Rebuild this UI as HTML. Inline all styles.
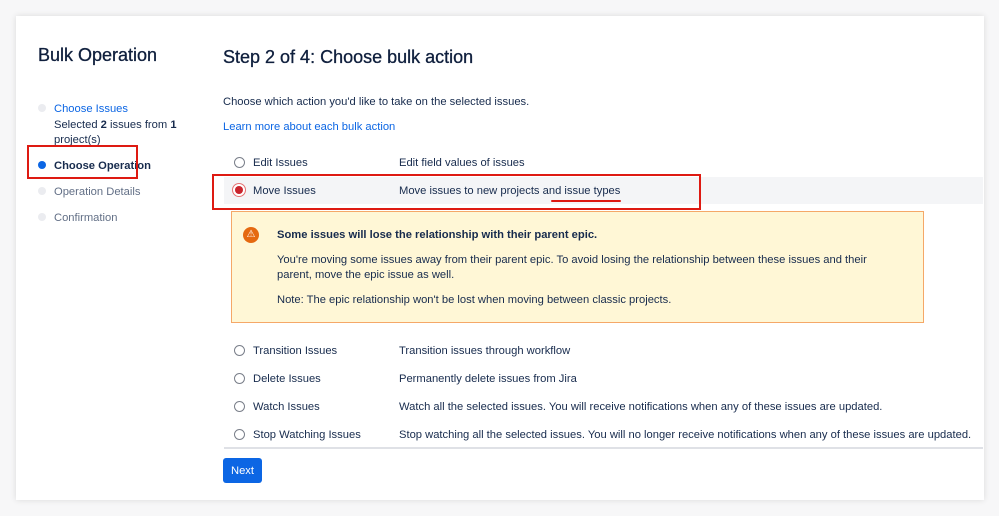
<!DOCTYPE html>
<html><head><style>
*{margin:0;padding:0;box-sizing:border-box}
body{width:999px;height:516px;background:#f7f7f8;font-family:"Liberation Sans",sans-serif;color:#172b4d;position:relative;overflow:hidden}
.card{position:absolute;left:16px;top:16px;width:968px;height:484px;background:#fff;box-shadow:0 0 6px rgba(0,0,0,.12)}
.a{position:absolute;white-space:nowrap;font-size:11.2px;margin-top:1px}
.dot{position:absolute;width:8px;height:8px;border-radius:50%;background:#ebecf0}
.radio{position:absolute;width:11px;height:11px;border-radius:50%;border:1px solid #7a7f8a;background:#fff}
.red{position:absolute;border:2.5px solid #de1a12}
</style></head><body>
<div class="card"></div>
<div class="a" style="left:38px;top:44px;font-size:18px;color:#0f1f3d;-webkit-text-stroke:0.3px #0f1f3d">Bulk Operation</div>
<div class="a" style="left:223px;top:46px;font-size:18px;color:#0f1f3d;-webkit-text-stroke:0.3px #0f1f3d">Step 2 of 4: Choose bulk action</div>

<div class="dot" style="left:38px;top:104px"></div>
<div class="a" style="left:54px;top:102px;color:#0c66e4">Choose Issues</div>
<div class="a" style="left:54px;top:118px">Selected <b>2</b> issues from <b>1</b></div>
<div class="a" style="left:54px;top:133px">project(s)</div>
<div class="dot" style="left:38px;top:161px;background:#0c66e4"></div>
<div class="a" style="left:54px;top:159px;font-weight:bold">Choose Operation</div>
<div class="dot" style="left:38px;top:187px"></div>
<div class="a" style="left:54px;top:185px;color:#626f86">Operation Details</div>
<div class="dot" style="left:38px;top:213px"></div>
<div class="a" style="left:54px;top:211px;color:#626f86">Confirmation</div>
<div class="red" style="left:27px;top:145px;width:111px;height:34px"></div>

<div class="a" style="left:223px;top:95px">Choose which action you'd like to take on the selected issues.</div>
<div class="a" style="left:223px;top:120px;color:#0c66e4">Learn more about each bulk action</div>

<div class="radio" style="left:234px;top:157px"></div>
<div class="a" style="left:253px;top:156px">Edit Issues</div>
<div class="a" style="left:399px;top:156px">Edit field values of issues</div>

<div style="position:absolute;left:224px;top:177px;width:759px;height:27px;background:#f4f5f7"></div>
<div style="position:absolute;left:232px;top:183px;width:14px;height:14px;border-radius:50%;border:1.5px solid #e57373;background:#fff"></div>
<div style="position:absolute;left:235px;top:186px;width:8px;height:8px;border-radius:50%;background:#c9252d"></div>
<div class="a" style="left:253px;top:184px">Move Issues</div>
<div class="a" style="left:399px;top:184px">Move issues to new projects and issue types</div>
<div class="red" style="left:212px;top:174px;width:489px;height:36px"></div>
<div style="position:absolute;left:551px;top:200px;width:70px;height:2px;background:#de1a12;border-radius:1px"></div>

<div style="position:absolute;left:231px;top:211px;width:693px;height:112px;background:#fff7d6;border:1px solid #f5a868"></div>
<div style="position:absolute;left:243px;top:227px;width:16px;height:16px;border-radius:50%;background:#e56910;color:#fff;font-size:10px;text-align:center;line-height:16px">⚠</div>
<div class="a" style="left:277px;top:228px;font-weight:bold">Some issues will lose the relationship with their parent epic.</div>
<div class="a" style="left:277px;top:253px">You're moving some issues away from their parent epic. To avoid losing the relationship between these issues and their</div>
<div class="a" style="left:277px;top:268px">parent, move the epic issue as well.</div>
<div class="a" style="left:277px;top:293px">Note: The epic relationship won't be lost when moving between classic projects.</div>

<div class="radio" style="left:234px;top:345px"></div>
<div class="a" style="left:253px;top:344px">Transition Issues</div>
<div class="a" style="left:399px;top:344px">Transition issues through workflow</div>
<div class="radio" style="left:234px;top:373px"></div>
<div class="a" style="left:253px;top:372px">Delete Issues</div>
<div class="a" style="left:399px;top:372px">Permanently delete issues from Jira</div>
<div class="radio" style="left:234px;top:401px"></div>
<div class="a" style="left:253px;top:400px">Watch Issues</div>
<div class="a" style="left:399px;top:400px">Watch all the selected issues. You will receive notifications when any of these issues are updated.</div>
<div class="radio" style="left:234px;top:429px"></div>
<div class="a" style="left:253px;top:428px">Stop Watching Issues</div>
<div class="a" style="left:399px;top:428px">Stop watching all the selected issues. You will no longer receive notifications when any of these issues are updated.</div>
<div style="position:absolute;left:224px;top:447px;width:759px;height:2px;background:#dfe1e6"></div>
<div style="position:absolute;left:223px;top:458px;width:39px;height:25px;background:#0c66e4;border-radius:3px;color:#fff;font-size:11.2px;text-align:center;line-height:27px">Next</div>
</body></html>
